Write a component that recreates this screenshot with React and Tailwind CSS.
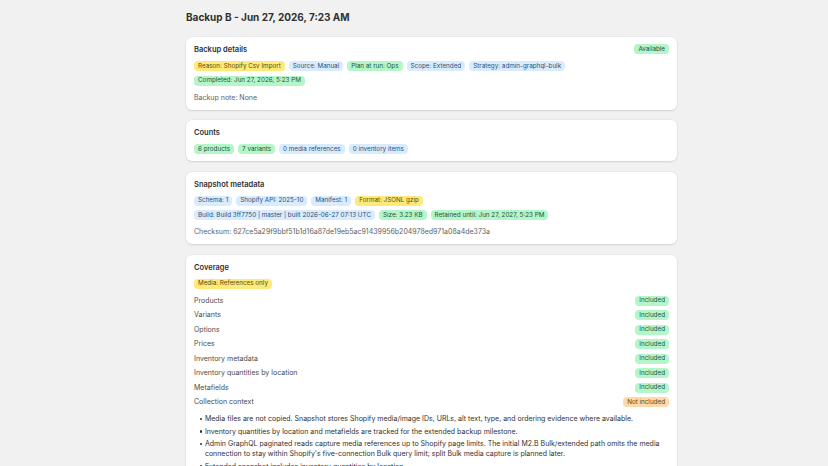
import React from 'react';

const tones = {
    info: 'bg-[#d9ecff] text-[#2f4f6e]',
    success: 'bg-[#b4f6c8] text-[#1f5140]',
    attention: 'bg-[#ffe97a] text-[#5a4c00]',
    warning: 'bg-[#ffd9a8] text-[#5e4200]',
};

const Badge = ({ tone = 'info', children }) => (
    <span
        className={`inline-flex h-[10px] items-center rounded-[4px] px-[4px] text-[6.3px] leading-none whitespace-nowrap ${tones[tone]}`}
    >
        {children}
    </span>
);

const Card = ({ title, aside, children }) => (
    <section className="flex flex-col gap-[7px] rounded-[6px] bg-white px-[8px] pt-[7px] pb-[7px] shadow-[0_1px_2px_rgba(0,0,0,0.10),0_0_0_0.5px_rgba(0,0,0,0.06)]">
        <div className="flex h-[10px] items-center justify-between">
            <h2 className="translate-y-[1px] text-[7.5px] leading-[10px] font-semibold text-[#303030]">{title}</h2>
            {aside}
        </div>
        {children}
    </section>
);

const BadgeRows = ({ rows }) => (
    <div className="flex flex-col gap-[4.5px]">
        {rows.map((row, i) => (
            <div key={i} className="flex flex-wrap gap-[4px]">
                {row.map(([tone, label]) => (
                    <Badge key={label} tone={tone}>
                        {label}
                    </Badge>
                ))}
            </div>
        ))}
    </div>
);

const coverage = [
    ['Products', true],
    ['Variants', true],
    ['Options', true],
    ['Prices', true],
    ['Inventory metadata', true],
    ['Inventory quantities by location', true],
    ['Metafields', true],
    ['Collection context', false],
];

const notes = [
    'Media files are not copied. Snapshot stores Shopify media/image IDs, URLs, alt text, type, and ordering evidence where available.',
    'Inventory quantities by location and metafields are tracked for the extended backup milestone.',
    "Admin GraphQL paginated reads capture media references up to Shopify page limits. The initial M2.B Bulk/extended path omits the media connection to stay within Shopify's five-connection Bulk query limit; split Bulk media capture is planned later.",
    'Extended snapshot includes inventory quantities by location.',
];

export default function App() {
    return (
        <div
            className="min-h-screen bg-[#f1f1f1] pb-[40px]"
            style={{ fontFamily: 'Inter, "Noto Sans", sans-serif' }}
        >
            <div className="ml-[186px] w-[491px] pt-[10px]">
                {/* Page header */}
                <h1 className="h-[14px] text-[10px] leading-[14px] font-bold text-[#303030]">
                    Backup B - Jun 27, 2026, 7:23 AM
                </h1>

                <div className="mt-[13px] flex flex-col gap-[10.5px]">
                    <Card title="Backup details" aside={<Badge tone="success">Available</Badge>}>
                        <BadgeRows
                            rows={[
                                [
                                    ['attention', 'Reason: Shopify Csv Import'],
                                    ['info', 'Source: Manual'],
                                    ['success', 'Plan at run: Ops'],
                                    ['info', 'Scope: Extended'],
                                    ['info', 'Strategy: admin-graphql-bulk'],
                                ],
                                [['success', 'Completed: Jun 27, 2026, 5:23 PM']],
                            ]}
                        />
                        <p className="text-[7px] leading-[10px] text-[#616161]">Backup note: None</p>
                    </Card>

                    <Card title="Counts">
                        <BadgeRows
                            rows={[
                                [
                                    ['success', '6 products'],
                                    ['success', '7 variants'],
                                    ['info', '0 media references'],
                                    ['info', '0 inventory items'],
                                ],
                            ]}
                        />
                    </Card>

                    <Card title="Snapshot metadata">
                        <BadgeRows
                            rows={[
                                [
                                    ['info', 'Schema: 1'],
                                    ['info', 'Shopify API: 2025-10'],
                                    ['info', 'Manifest: 1'],
                                    ['attention', 'Format: JSONL gzip'],
                                ],
                                [
                                    ['info', 'Build: Build 3ff7750 | master | built 2026-06-27 07:13 UTC'],
                                    ['success', 'Size: 3.23 KB'],
                                    ['success', 'Retained until: Jun 27, 2027, 5:23 PM'],
                                ],
                            ]}
                        />
                        <p className="text-[7px] leading-[10px] text-[#616161]">
                            Checksum: 627ce5a29f9bbf51b1d16a87de19eb5ac91439956b204978ed971a08a4de373a
                        </p>
                    </Card>

                    <Card title="Coverage">
                        <div className="flex">
                            <Badge tone="attention">Media: References only</Badge>
                        </div>
                        <div className="flex flex-col gap-[4.5px]">
                            {coverage.map(([label, included]) => (
                                <div key={label} className="flex h-[10px] items-center justify-between">
                                    <span className="text-[7px] leading-[10px] text-[#4a4a4a]">{label}</span>
                                    {included ? (
                                        <Badge tone="success">Included</Badge>
                                    ) : (
                                        <Badge tone="warning">Not included</Badge>
                                    )}
                                </div>
                            ))}
                        </div>
                        <ul className="flex flex-col gap-[2.5px] pl-[6px] text-[7px] leading-[10px] text-[#303030]">
                            {notes.map((n) => (
                                <li key={n} className="flex items-start">
                                    <span className="mt-[3.8px] mr-[2.5px] h-[2.4px] w-[2.4px] shrink-0 rounded-full bg-[#303030]" />
                                    <span>{n}</span>
                                </li>
                            ))}
                        </ul>
                    </Card>
                </div>
            </div>
        </div>
    );
}
